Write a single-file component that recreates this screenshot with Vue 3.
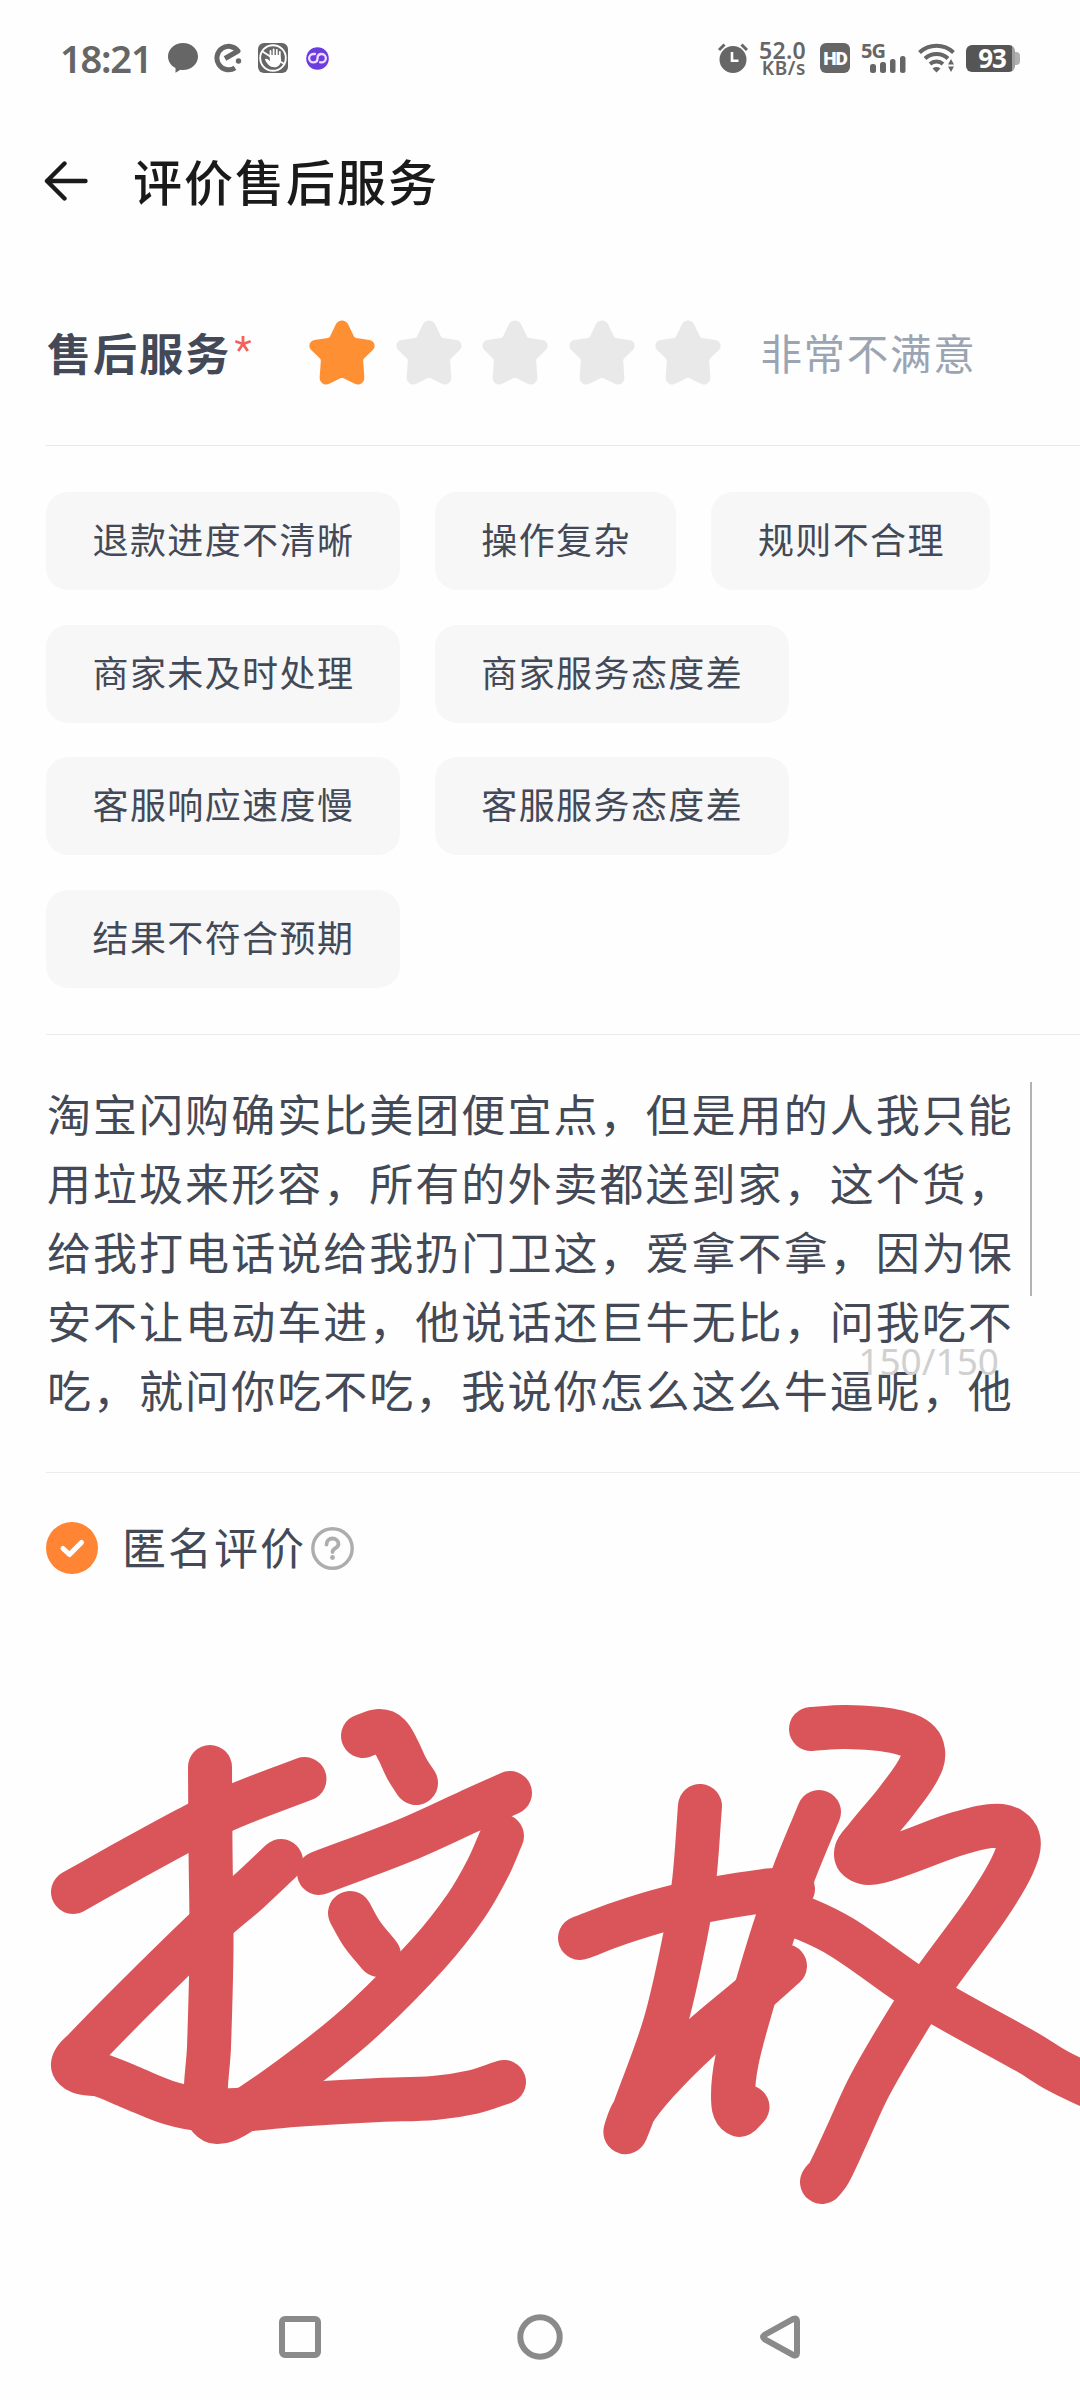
<template>
  <div class="page">
    <header class="status-bar">
      <div class="status-left">
        <span class="time">18:21</span>
        <svg class="ic-chat" width="30" height="30" viewBox="0 0 30 30">
          <path fill="#666" d="M15 0C23.300 0 30 6 30 13.500S23.300 27 15 27c-1 0-1.800 0-2.600-.2L7.500 29.800V25C3 22.800 0 18.500 0 13.500 0 6 6.700 0 15 0z" />
        </svg>
        <svg class="ic-ele" width="30" height="30" viewBox="0 0 30 30">
          <path fill="none" stroke="#666" stroke-width="5" d="M12 15.500L25 8A11.700 11.700 0 1 0 22 24.800" stroke-linejoin="round" />
          <circle cx="25.500" cy="18" r="2.700" fill="#666" />
        </svg>
        <svg class="ic-hand" width="30" height="30" viewBox="0 0 30 30">
          <rect width="30" height="30" rx="6" fill="#666" />
          <circle cx="15" cy="15" r="12.800" fill="none" stroke="#fff" stroke-width="1.900" />
          <path fill="#fff" d="M11.800 12h10.200l1.200 4.500C23 21.500 20 24.300 16.500 24.300c-4.800 0-7.500-3.500-9.700-8 1.500-1 3.200-.3 5 2z" />
          <path stroke="#fff" stroke-width="1.800" stroke-linecap="round" d="M12.500 8v6M15.600 6.500v7M18.800 6.800v7M21.800 8.800v6M4.500 8.500l7 4.500M22 18.500l4.500 2.500" />
        </svg>
        <svg class="ic-loop" width="23" height="23" viewBox="0 0 23 23">
          <circle cx="11.500" cy="11.500" r="11.300" fill="#6a3dde" />
          <path fill="none" stroke="#f3dcff" stroke-width="2.300" stroke-linecap="round" d="M9 7H7.300a4 4 0 0 0 0 8.300c2.800 0 4.200-1.800 4.200-4.100S12.900 7 15.700 7a4 4 0 0 1 0 8.300H14" />
        </svg>
      </div>
      <div class="status-right">
        <svg width="30" height="30" viewBox="0 0 30 30">
          <circle cx="15" cy="16.500" r="13.500" fill="#666" />
          <path fill="none" stroke="#666" stroke-width="3" d="M1 7L6.500 1.500M29 7L23.500 1.500" />
          <path fill="none" stroke="#fff" stroke-width="2.600" d="M14 9v8.800h6.500" />
        </svg>
        <div class="net-speed"><span>52.0</span><span class="unit">KB/s</span></div>
        <span class="hd">HD</span>
        <div class="signal">
          <span class="gen">5G</span>
          <svg width="36" height="17" viewBox="0 0 36 17">
            <g fill="#666">
              <rect x="0" y="8" width="6" height="9" rx="2.500" />
              <rect x="10" y="6" width="6" height="11" rx="2.500" />
              <rect x="20" y="3" width="5.500" height="14" rx="2.500" />
              <rect x="30" y="0" width="5.500" height="17" rx="2.500" />
            </g>
          </svg>
        </div>
        <svg class="wifi" width="38" height="30" viewBox="0 0 38 30">
          <g fill="none" stroke="#666" stroke-width="4">
            <path d="M1.500 9.500a25 25 0 0 1 34 0" />
            <path d="M7 15.500a17 17 0 0 1 23 0" />
            <path d="M12 21a10 10 0 0 1 13 0" />
          </g>
          <path fill="#666" d="M14.500 25.500q4-2.800 8 0L18.500 29.500zM30 21.500L33 16l3 5.500zM30 23.500h6L33 29z" />
        </svg>
        <div class="battery"><span class="level">93</span><i class="cap"></i></div>
      </div>
    </header>

    <nav class="title-bar">
      <svg width="44" height="42" viewBox="0 0 44 42">
        <path fill="none" stroke="#1a1a1a" stroke-width="4.400" stroke-linecap="round" stroke-linejoin="round" d="M20.500 3.500L3 21l17.500 17.500M3 21h38.500" />
      </svg>
      <h1>评价售后服务</h1>
    </nav>

    <section class="rating">
      <span class="label">售后服务</span>
      <svg class="required" width="18" height="18" viewBox="0 0 18 18">
        <path stroke="#f2635d" stroke-width="2.800" d="M9 1v8M9 9L1.300 6.300M9 9l7.700-2.700M9 9l-4.800 7M9 9l4.800 7" />
      </svg>
      <div class="stars">
        <svg v-for="n in 5" :key="n" width="66" height="65" viewBox="0 0 66 65" @click="score = n">
          <path
            :fill="n <= score ? '#ff8f33' : '#e9e9e9'"
            d="M27 4C29.500-.8 36.500-.8 39 4L45 16.500Q45.700 17.800 47.200 18L60.500 20C65.500 20.800 67.300 26.500 63.800 30L55 38.500Q54 39.700 54.200 41.200L55.300 57C55.800 62.500 50.500 66.200 45.800 63.700L34.500 58.200Q33 57.500 31.500 58.200L20.200 63.700C15.500 66.200 10.200 62.500 10.700 57L11.800 41.200Q12 39.700 11 38.500L2.200 30C-1.300 26.500 .5 20.800 5.500 20L18.800 18Q20.300 17.800 21 16.500z"
          />
        </svg>
      </div>
      <span class="score-text">{{ scoreTexts[score - 1] }}</span>
    </section>

    <section class="tags">
      <span v-for="tag in tags" :key="tag" class="tag">{{ tag }}</span>
    </section>

    <section class="comment">
      <p v-for="line in commentLines" :key="line">{{ line }}</p>
      <i class="scrollbar"></i>
      <span class="counter">150/150</span>
    </section>

    <section class="anonymous">
      <svg width="52" height="52" viewBox="0 0 52 52">
        <circle cx="26" cy="26" r="26" fill="#ff8534" />
        <path fill="none" stroke="#fff" stroke-width="5" stroke-linecap="round" stroke-linejoin="round" d="M17 26.500l6.500 6L35.500 20.500" />
      </svg>
      <span class="anonymous-text">匿名评价</span>
      <svg width="43" height="43" viewBox="0 0 43 43">
        <circle cx="21.500" cy="21.500" r="19.700" fill="none" stroke="#adadad" stroke-width="3.400" />
        <path fill="none" stroke="#adadad" stroke-width="3.800" stroke-linecap="round" d="M15.500 17.500c0-3.800 2.700-6 6-6s6 2.300 6 5.500c0 4.300-6 4-6 8" />
        <circle cx="21.500" cy="30.500" r="2.400" fill="#adadad" />
      </svg>
    </section>

    <footer class="nav-bar">
      <svg width="46" height="46" viewBox="0 0 46 46"><rect x="5" y="5" width="36" height="36" rx="3" /></svg>
      <svg width="46" height="46" viewBox="0 0 46 46"><circle cx="23" cy="23" r="19.700" /></svg>
      <svg width="46" height="46" viewBox="0 0 46 46"><path d="M7.500 20.800L36.500 4.800Q40 3.500 40 7v32q0 3.500-3.500 2.200L7.500 25.200Q4.500 23 7.500 20.800z" /></svg>
    </footer>

    <div class="watermark">
      <div v-for="n in 32" :key="n" class="mark">ELE53564246<br />1769765575</div>
    </div>

    <!-- 手写涂鸦 -->
    <svg class="doodle" width="1080" height="2400" viewBox="0 0 1080 2400">
      <path v-for="(stroke, i) in strokes" :key="i" :d="toPath(stroke)" />
    </svg>
  </div>
</template>

<script setup>
import { ref } from 'vue'

const score = ref(1)
const scoreTexts = ['非常不满意', '不满意', '一般', '满意', '非常满意']

const tags = [
  '退款进度不清晰',
  '操作复杂',
  '规则不合理',
  '商家未及时处理',
  '商家服务态度差',
  '客服响应速度慢',
  '客服服务态度差',
  '结果不符合预期',
]

const commentLines = [
  '淘宝闪购确实比美团便宜点，但是用的人我只能',
  '用垃圾来形容，所有的外卖都送到家，这个货，',
  '给我打电话说给我扔门卫这，爱拿不拿，因为保',
  '安不让电动车进，他说话还巨牛无比，问我吃不',
  '吃，就问你吃不吃，我说你怎么这么牛逼呢，他',
]

const strokes = [
  [[73, 1892], [130, 1860], [189, 1828], [232, 1807], [304.500, 1779]],
  [[210, 1767], [210.500, 1847], [211.500, 1947], [209, 2047], [206, 2110], [217, 2122], [243, 2111], [312, 2062], [366, 2017], [429, 1953], [466, 1906], [488, 1868], [502, 1836]],
  [[281, 1861], [248, 1892], [213, 1922], [140, 1993], [84, 2050], [73, 2064], [80, 2072], [100, 2075], [130, 2087], [170, 2103], [207, 2110], [250, 2109], [293, 2105], [379, 2100], [434, 2098], [473, 2092], [504, 2082]],
  [[363, 1736], [379, 1731], [389, 1735], [398, 1750], [407, 1769], [416, 1783]],
  [[319, 1873], [406, 1840], [470, 1811], [510, 1793]],
  [[350, 1913], [362, 1934], [379, 1955]],
  [[580, 1938], [620, 1923], [666, 1909], [713, 1899], [764, 1891], [793, 1889]],
  [[700, 1806], [694, 1882], [685, 1937], [665, 2024], [636, 2105], [626, 2131], [632, 2114], [657, 2082], [700, 2039], [751, 1996], [785, 1966]],
  [[819, 1812], [794, 1873], [774, 1930], [753, 2000], [737, 2060], [733, 2098], [738, 2114], [747.500, 2107]],
  [[785, 1914], [805, 1919], [843, 1938], [906, 1982], [942, 2005], [1027, 2052], [1058, 2071], [1091, 2087]],
  [[811, 1729], [846, 1727], [893, 1731], [919, 1742], [922, 1762], [898, 1799], [866, 1838], [856, 1855], [869, 1863], [902, 1854], [960, 1833], [1001, 1826], [1018, 1838], [1013, 1864], [987, 1908], [936, 1978], [911, 2015], [870, 2085], [846, 2137], [829, 2173], [822, 2182]],
]

// 用三次贝塞尔把采样点连成平滑曲线
const toPath = (pts) => {
  let d = `M${pts[0][0]} ${pts[0][1]}`
  for (let i = 0; i < pts.length - 1; i++) {
    const p0 = pts[i - 1] || pts[i]
    const p1 = pts[i]
    const p2 = pts[i + 1]
    const p3 = pts[i + 2] || p2
    // 控制柄不超过线段长度的三分之一，避免拐角处打结
    const len = Math.hypot(p2[0] - p1[0], p2[1] - p1[1])
    const handle = (a, b) => {
      const dist = Math.hypot(b[0] - a[0], b[1] - a[1]) || 1
      return [((b[0] - a[0]) / dist) * (len / 3), ((b[1] - a[1]) / dist) * (len / 3)]
    }
    const h1 = handle(p0, p2)
    const h2 = handle(p1, p3)
    d += `C${p1[0] + h1[0]} ${p1[1] + h1[1]} ${p2[0] - h2[0]} ${p2[1] - h2[1]} ${p2[0]} ${p2[1]}`
  }
  return d
}
</script>

<style>
body {
  margin: 0;
  background: #fefefe;
}
</style>

<style scoped>
.page {
  position: relative;
  display: flex;
  flex-direction: column;
  width: 1080px;
  height: 2400px;
  overflow: hidden;
  background: #fefefe;
  color: #434956;
  font-family: "Noto Sans CJK SC", sans-serif;
}
svg {
  display: block;
  flex: none;
}
.status-bar {
  display: flex;
  justify-content: space-between;
  align-items: center;
  height: 116px;
  padding: 0 60px 0 60px;
  color: #666;
  font-family: "Noto Sans", sans-serif;
}
.status-left,
.status-right {
  display: flex;
  align-items: center;
}
.time {
  width: 108px;
  font-size: 38px;
  line-height: 44px;
  font-weight: 600;
  letter-spacing: -1.200px;
  white-space: nowrap;
}
.ic-ele {
  margin-left: 15px;
}
.ic-hand {
  margin-left: 15px;
}
.ic-loop {
  margin-left: 18px;
}
.net-speed {
  display: flex;
  flex-direction: column;
  align-items: flex-end;
  width: 58px;
  font-size: 23px;
  line-height: 19px;
  font-weight: 600;
  letter-spacing: 0.3px;
}
.unit {
  font-size: 19px;
  line-height: 16px;
  letter-spacing: 0.6px;
}
.hd {
  width: 30px;
  height: 30px;
  margin-left: 14px;
  border-radius: 6px;
  background: #666;
  color: #fff;
  font-family: Roboto, sans-serif;
  font-size: 19px;
  line-height: 31px;
  font-weight: 900;
  text-align: center;
  letter-spacing: -1px;
}
.signal {
  display: flex;
  flex-direction: column;
  align-items: flex-end;
  width: 45px;
  height: 30px;
  margin-left: 11px;
}
.gen {
  align-self: flex-start;
  height: 13px;
  font-size: 20px;
  line-height: 15px;
  font-weight: 700;
  letter-spacing: -1px;
}
.wifi {
  margin-left: 12px;
}
.battery {
  display: flex;
  align-items: center;
  margin-left: 10px;
}
.level {
  box-sizing: border-box;
  width: 49px;
  height: 27px;
  padding-left: 3px;
  border-radius: 6px;
  background: linear-gradient(90deg, #555 46px, #a0a0a0 46px);
  color: #fff;
  font-size: 26px;
  line-height: 27px;
  font-weight: 700;
  text-align: center;
  letter-spacing: -1px;
}
.cap {
  width: 5px;
  height: 13px;
  border-radius: 0 4px 4px 0;
  background: #b0b0b0;
}
.title-bar {
  display: flex;
  align-items: center;
  height: 130px;
  padding-left: 44px;
}
.title-bar h1 {
  margin: 0 0 3px 45px;
  color: #1a1a1a;
  font-size: 49px;
  line-height: 70px;
  font-weight: 500;
  letter-spacing: 2px;
}
.rating {
  display: flex;
  align-items: center;
  box-sizing: border-box;
  height: 200px;
  margin-left: 46px;
  padding-top: 14px;
  border-bottom: 1px solid #e8e8e8;
}
.label {
  margin: 0 0 2px 1px;
  font-size: 44px;
  line-height: 64px;
  font-weight: 700;
  letter-spacing: 2.100px;
}
.required {
  align-self: flex-start;
  margin: 75px 0 0 3px;
}
.stars {
  display: flex;
  gap: 20.500px;
  margin-left: 57px;
}
.score-text {
  margin: 0 0 2px 39px;
  color: #9ba4b2;
  font-size: 41.500px;
  line-height: 60px;
  letter-spacing: 1.700px;
}
.tags {
  display: flex;
  flex-wrap: wrap;
  align-content: flex-start;
  gap: 34.500px 35px;
  box-sizing: border-box;
  height: 589px;
  margin-left: 46px;
  padding-top: 46px;
  border-bottom: 1px solid #ececec;
}
.tag {
  height: 98px;
  padding: 0 45.500px 0 46.500px;
  border-radius: 22px;
  background: #f7f7f7;
  font-size: 36px;
  line-height: 93px;
  letter-spacing: 1.400px;
}
.comment {
  position: relative;
  box-sizing: border-box;
  height: 438px;
  margin-left: 46px;
  padding: 44px 0 0 1px;
  border-bottom: 1px solid #ececec;
}
.comment p {
  margin: 0;
  font-size: 44px;
  line-height: 69px;
  letter-spacing: 2.040px;
  white-space: nowrap;
}
.scrollbar {
  position: absolute;
  top: 47px;
  right: 48px;
  width: 2px;
  height: 214px;
  background: #b2b2b2;
}
.counter {
  position: absolute;
  top: 301px;
  right: 81px;
  color: #d0d0d0;
  font-family: "Noto Sans", sans-serif;
  font-size: 37px;
  line-height: 50px;
}
.anonymous {
  display: flex;
  align-items: center;
  height: 150px;
  padding-left: 46px;
}
.anonymous-text {
  margin: 0 5px 4px 24px;
  font-size: 44px;
  line-height: 64px;
  letter-spacing: 2px;
}
.nav-bar {
  display: flex;
  justify-content: center;
  gap: 194px;
  margin-top: auto;
  padding-bottom: 40px;
}
.nav-bar svg {
  fill: none;
  stroke: #8a8a8a;
  stroke-width: 6;
}
.watermark {
  position: absolute;
  inset: 76px 0 auto 8px;
  display: grid;
  grid-template-columns: repeat(4, 270px);
  grid-auto-rows: 270px;
  pointer-events: none;
}
.mark {
  color: rgba(0, 0, 0, 0.01);
  font-size: 29px;
  line-height: 31px;
  font-weight: 300;
  letter-spacing: 5px;
}
.doodle {
  position: absolute;
  top: 0;
  left: 0;
  fill: none;
  stroke: #da555a;
  stroke-width: 44;
  stroke-linecap: round;
  stroke-linejoin: round;
  pointer-events: none;
}
</style>
